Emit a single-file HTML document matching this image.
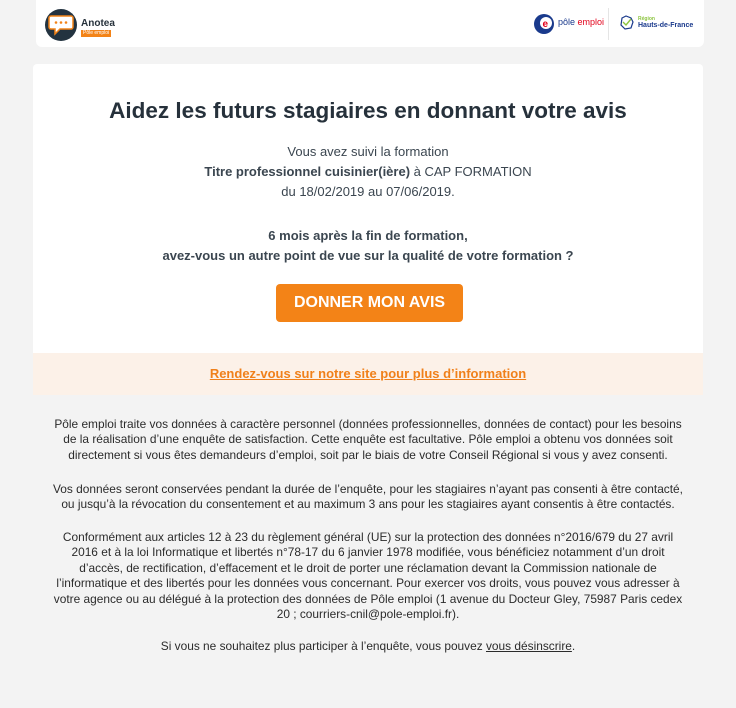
<!DOCTYPE html>
<html><head><meta charset="utf-8"><style>
body{margin:0;background:#f3f3f3;font-family:"Liberation Sans",sans-serif;color:#2b3440;width:736px;height:708px;overflow:hidden;position:relative}
.hdr{position:absolute;left:36px;top:0;width:668px;height:47px;background:#fff;border-radius:0 0 6px 6px}
.card{position:absolute;left:33px;top:64px;width:670px;height:331px;background:#fff;border-radius:4px 4px 0 0;overflow:hidden}
h1{position:absolute;top:97px;left:0;width:100%;margin:0;text-align:center;font-size:22.5px;font-weight:bold;color:#26313b}
.t{position:absolute;left:0;width:100%;text-align:center;font-size:13px;line-height:20px;color:#3b4650}
.btn{position:absolute;left:243px;top:220px;width:187px;height:38px;background:#f38317;border-radius:4px;color:#fff;font-size:16px;font-weight:bold;text-align:center;line-height:38px}
.bg{position:absolute;left:0;top:289px;width:100%;height:42px;background:#fcf1e8;text-align:center;line-height:42px}
.bg a{color:#f0801a;font-weight:bold;font-size:13px;text-decoration:underline}
.f{position:absolute;left:0;width:736px;text-align:center;font-size:11.9px;line-height:15.4px;color:#2b2b2b;white-space:nowrap}
</style></head><body>
<div class="hdr">
<svg style="position:absolute;left:9px;top:9px" width="32" height="32" viewBox="0 0 32 32"><circle cx="16" cy="16" r="16" fill="#233340"/><path d="M6 7h20a2 2 0 0 1 2 2v9a2 2 0 0 1-2 2h-11l-5 5v-5h-4a2 2 0 0 1-2-2v-9a2 2 0 0 1 2-2z" fill="#fff" stroke="#f38317" stroke-width="1.5"/><circle cx="11" cy="13.5" r="1.3" fill="#f38317"/><circle cx="16" cy="13.5" r="1.3" fill="#f38317"/><circle cx="21" cy="13.5" r="1.3" fill="#f38317"/></svg>
<div style="position:absolute;left:45px;top:18px;font-size:10px;font-weight:bold;color:#26313b">Anotea</div>
<div style="position:absolute;left:45px;top:30px;background:#f38317;color:#fff;font-size:5px;padding:0 2px;line-height:7px">Pôle emploi</div>
<svg style="position:absolute;left:497px;top:13px" width="22" height="22" viewBox="0 0 22 22"><circle cx="11" cy="11" r="10" fill="#1a3a8c"/><circle cx="13" cy="10" r="6" fill="#fff"/><text x="9.5" y="14" font-size="10" font-weight="bold" fill="#e2001a" font-family="Liberation Sans">e</text></svg>
<div style="position:absolute;left:522px;top:17px;font-size:9px;color:#1a3a8c">pôle <span style="color:#e2001a">emploi</span></div>
<div style="position:absolute;left:572px;top:8px;width:1px;height:32px;background:#e5e5e5"></div>
<svg style="position:absolute;left:583px;top:15px" width="15" height="15" viewBox="0 0 15 15"><path d="M3 3l4-2 5 2 2 4-2 6-6 1-4-4z" fill="none" stroke="#1a3a8c" stroke-width="1.2"/><path d="M4 7l3 3 5-6" fill="none" stroke="#8cc43f" stroke-width="1.4"/></svg>
<div style="position:absolute;left:602px;top:16px;font-size:5px;color:#8cc43f;font-weight:bold">Région</div>
<div style="position:absolute;left:602px;top:22px;font-size:7px;color:#1a3a8c;font-weight:bold">Hauts-de-France</div>
</div>
<div class="card">
<h1 style="top:34px">Aidez les futurs stagiaires en donnant votre avis</h1>
<div class="t" style="top:78px">Vous avez suivi la formation<br><b>Titre professionnel cuisinier(ière)</b> à CAP FORMATION<br>du 18/02/2019 au 07/06/2019.</div>
<div class="t" style="top:162px;font-weight:bold">6 mois après la fin de formation,<br>avez-vous un autre point de vue sur la qualité de votre formation ?</div>
<div class="btn">DONNER MON AVIS</div>
<div class="bg"><a>Rendez-vous sur notre site pour plus d’information</a></div>
</div>
<div class="f" style="top:417px">Pôle emploi traite vos données à caractère personnel (données professionnelles, données de contact) pour les besoins<br>de la réalisation d’une enquête de satisfaction. Cette enquête est facultative. Pôle emploi a obtenu vos données soit<br>directement si vous êtes demandeurs d’emploi, soit par le biais de votre Conseil Régional si vous y avez consenti.</div>
<div class="f" style="top:482px">Vos données seront conservées pendant la durée de l’enquête, pour les stagiaires n’ayant pas consenti à être contacté,<br>ou jusqu’à la révocation du consentement et au maximum 3 ans pour les stagiaires ayant consentis à être contactés.</div>
<div class="f" style="top:530px">Conformément aux articles 12 à 23 du règlement général (UE) sur la protection des données n°2016/679 du 27 avril<br>2016 et à la loi Informatique et libertés n°78-17 du 6 janvier 1978 modifiée, vous bénéficiez notamment d’un droit<br>d’accès, de rectification, d’effacement et le droit de porter une réclamation devant la Commission nationale de<br>l’informatique et des libertés pour les données vous concernant. Pour exercer vos droits, vous pouvez vous adresser à<br>votre agence ou au délégué à la protection des données de Pôle emploi (1 avenue du Docteur Gley, 75987 Paris cedex<br>20 ; courriers-cnil@pole-emploi.fr).</div>
<div class="f" style="top:639px">Si vous ne souhaitez plus participer à l’enquête, vous pouvez <u>vous désinscrire</u>.</div>
</body></html>
